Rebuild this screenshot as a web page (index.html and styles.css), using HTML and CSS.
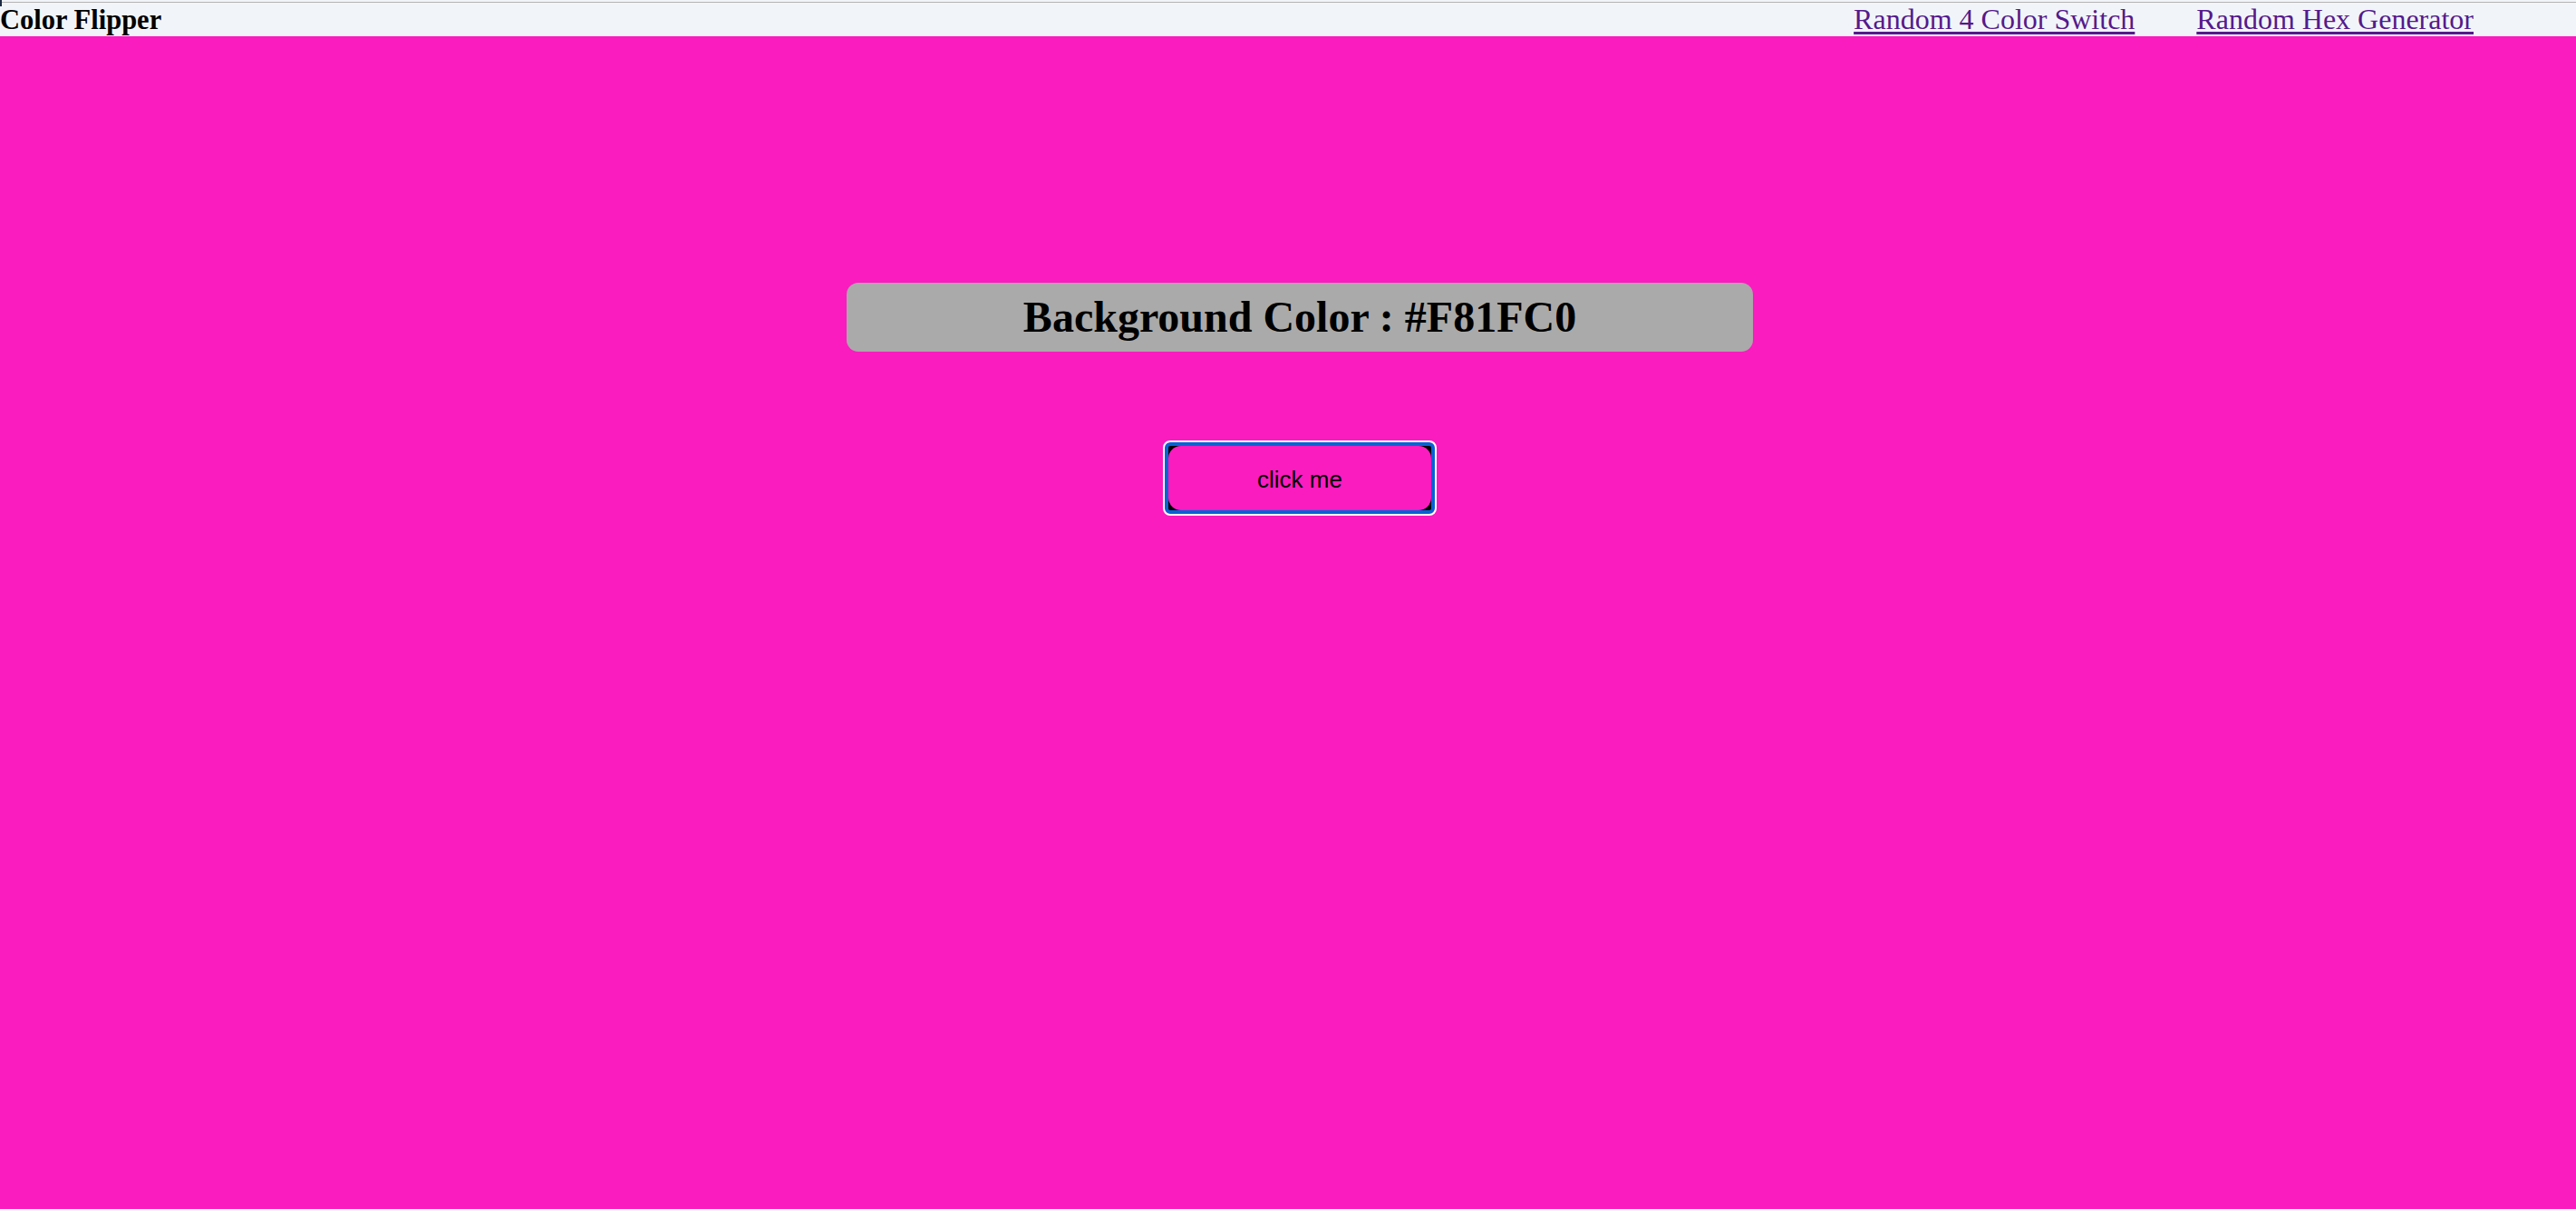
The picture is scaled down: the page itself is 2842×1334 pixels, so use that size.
FILE: index.html
```html
<!DOCTYPE html>
<html lang="en">
<head>
<meta charset="utf-8">
<title>Color Flipper</title>
<link rel="stylesheet" href="styles.css">
</head>
<body>
<nav class="nav">
  <span class="mark"></span>
  <div class="rule"></div>
  <div class="nav-row">
    <h1 class="brand">Color Flipper</h1>
    <div class="links">
      <a href="#" class="link">Random 4 Color Switch</a>
      <a href="#" class="link">Random Hex Generator</a>
    </div>
  </div>
</nav>
<main class="main">
  <h2 class="color-box">Background Color : #F81FC0</h2>
  <button class="btn"><span class="btn-inner">click me</span></button>
</main>
</body>
</html>
```

FILE: styles.css
```css
* { box-sizing: border-box; }
html, body { margin: 0; padding: 0; }
body {
  background: #fa1cbf;
  min-height: 100vh;
  font-family: "Liberation Serif", "Times New Roman", serif;
}
.nav {
  position: relative;
  background: #f1f5f9;
  height: 40px;
  padding-top: 2px;
}
.mark {
  position: absolute;
  left: 0;
  top: 0;
  width: 2px;
  height: 7px;
  background: #1c2a44;
}
.rule {
  height: 1px;
  background: #b3b3b3;
}
.nav-row {
  display: flex;
  justify-content: space-between;
  align-items: baseline;
}
.brand {
  margin: 0;
  font-size: 30.5px;
  font-weight: bold;
  line-height: 36px;
  color: #000;
}
.links {
  display: flex;
  gap: 68px;
  padding-right: 113px;
}
.link {
  font-size: 32px;
  line-height: 36px;
  color: #551a8b;
  text-decoration: underline;
  text-underline-offset: 3px;
}
.main {
  display: flex;
  flex-direction: column;
  align-items: center;
  padding-left: 26px;
  padding-top: 272px;
}
.color-box {
  margin: 0;
  width: 1000px;
  height: 76px;
  background: #aaaaaa;
  border-radius: 13px;
  text-align: center;
  font-size: 48px;
  font-weight: bold;
  line-height: 76px;
  color: #000;
}
.btn {
  margin-top: 100px;
  width: 298px;
  height: 79px;
  padding: 0;
  border: 4px solid #0863d4;
  border-radius: 6px;
  outline: 2px solid #ffffff;
  background: #000;
  cursor: pointer;
}
.btn-inner {
  display: flex;
  align-items: center;
  justify-content: center;
  height: 100%;
  padding-top: 3px;
  background: #fa1cbf;
  border-radius: 14px;
  font-family: "Liberation Sans", Arial, sans-serif;
  font-size: 26px;
  color: #000;
}
```
